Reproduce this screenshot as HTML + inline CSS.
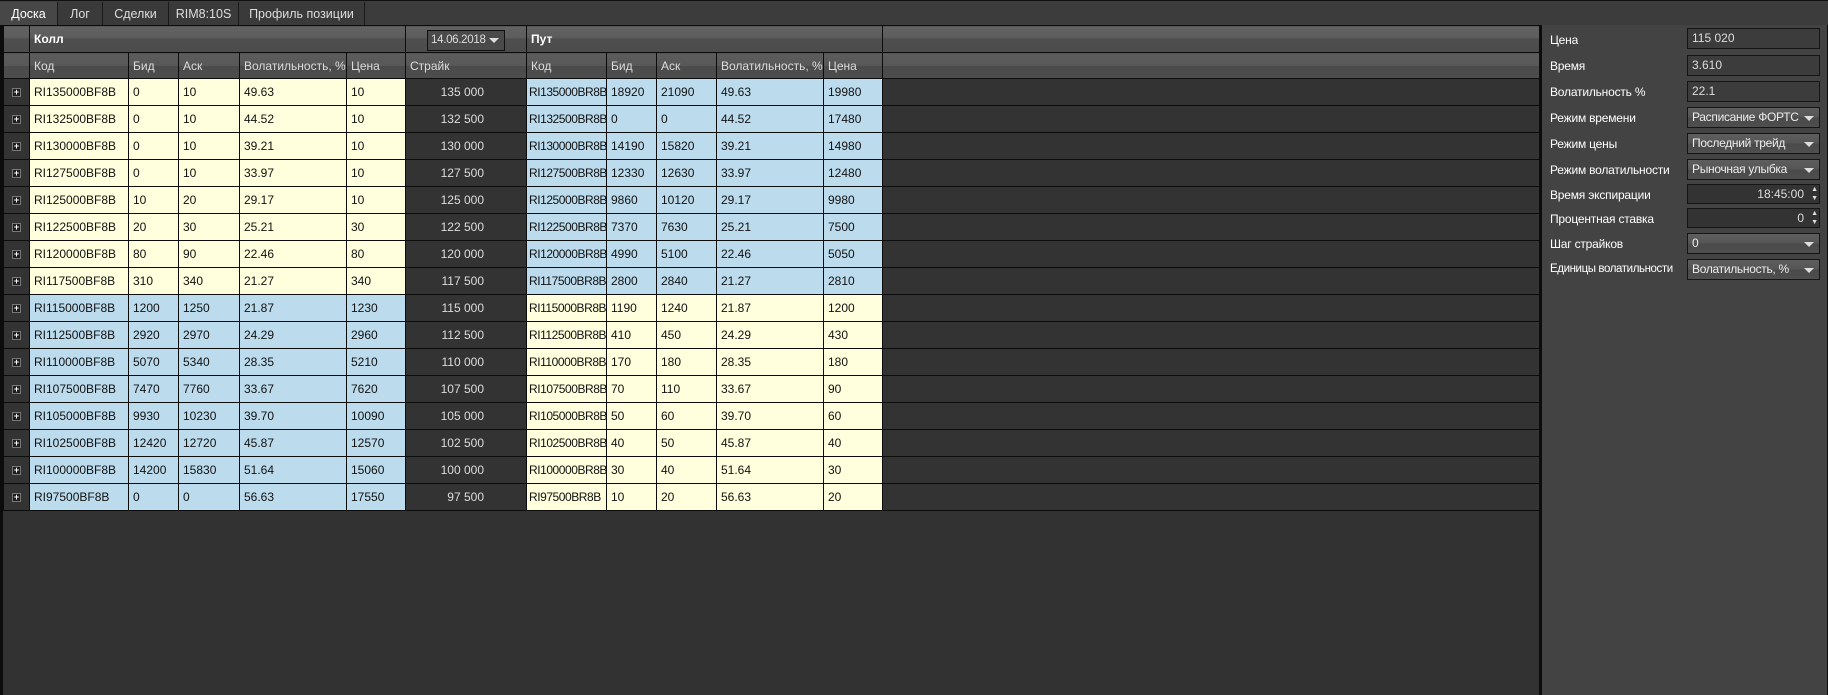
<!DOCTYPE html>
<html><head><meta charset="utf-8"><style>
*{margin:0;padding:0;box-sizing:border-box}
body{width:1828px;height:695px;background:#323232;font-family:"Liberation Sans","DejaVu Sans",sans-serif;font-size:12px;overflow:hidden;position:relative}
.tabs{position:absolute;left:0;top:0;width:1828px;height:25px;background:#3c3c3c;border-top:1px solid #111}
.tab{position:absolute;top:1px;height:24px;line-height:24px;color:#ddd;text-align:center;background:#3a3a3a;border-right:1px solid #1a1a1a;font-size:12.5px}
.tab.act{background:#474747;color:#fff}
table{position:absolute;left:3px;top:25px;width:1536px;border-collapse:collapse;table-layout:fixed}
td{border:1px solid #0c0c0c;height:27px;padding:0 0 0 4px;white-space:nowrap;overflow:hidden;color:#111;font-size:12px}
td:nth-child(8){padding-left:2px;letter-spacing:-0.45px}
.gh td{height:27px;background:linear-gradient(#626262 0,#5c5c5c 45%,#4e4e4e 46%,#4c4c4c 100%);color:#fff;font-weight:bold}
.ch td{height:26px;background:linear-gradient(#5c5c5c 0,#585858 50%,#4b4b4b 51%,#4d4d4d 100%);color:#ddd}
.y{background:#ffffdd}.b{background:#bcdcee}
.s{background:#333;color:#ddd;text-align:right;padding-right:42px}
.e{background:#333;padding:0}
.e span{display:block;margin:0 auto;width:9px;height:9px;background:#1e1e1e;border:1px solid #777;color:#fff;font-size:9px;line-height:7px;text-align:center;font-weight:bold}
.f{background:#333}
.rp{position:absolute;left:1539px;top:25px;width:289px;height:670px;background:#434343;border-left:3px solid #0c0c0c;border-right:1px solid #0c0c0c}
.lb{position:absolute;left:8px;color:#fff;font-size:12px;letter-spacing:-0.2px}
.in{position:absolute;left:145px;width:133px;height:21px;border:1px solid #151515;background:#3c3c3c;color:#ddd;font-size:12px;line-height:19px;padding-left:4px;white-space:nowrap;overflow:hidden}
.dd{background:linear-gradient(#5e5e5e,#555 50%,#4a4a4a 51%,#4e4e4e);color:#eee;letter-spacing:-0.3px}
.dd:after{content:"";position:absolute;right:5px;top:8px;border-left:5px solid transparent;border-right:5px solid transparent;border-top:5px solid #ddd}
.sp{background:#333;text-align:right;padding-right:15px}
.sp:after{content:"▲\A▼";white-space:pre;position:absolute;right:1px;top:0;font-size:7px;line-height:9px;color:#ddd}
.date{position:absolute;left:427px;top:30px;width:78px;height:21px;border:1px solid #111;background:#4a4a4a;color:#ddd;line-height:19px;padding-left:3px;font-size:11.5px;letter-spacing:-0.3px}
.date:after{content:"";position:absolute;right:5px;top:7px;border-left:5px solid transparent;border-right:5px solid transparent;border-top:5px solid #ddd}
</style></head><body>
<div class="tabs">
<div class="tab act" style="left:0;width:58px">Доска</div>
<div class="tab" style="left:58px;width:45px">Лог</div>
<div class="tab" style="left:103px;width:66px">Сделки</div>
<div class="tab" style="left:169px;width:70px">RIM8:10S</div>
<div class="tab" style="left:239px;width:126px">Профиль позиции</div>
</div>
<table>
<colgroup><col style="width:26px"><col style="width:99px"><col style="width:50px"><col style="width:61px"><col style="width:107px"><col style="width:59px"><col style="width:121px"><col style="width:80px"><col style="width:50px"><col style="width:60px"><col style="width:107px"><col style="width:59px"><col style="width:657px"></colgroup>
<tr class="gh"><td></td><td colspan="5">Колл</td><td></td><td colspan="5" style="padding-left:4px;letter-spacing:0">Пут</td><td></td></tr>
<tr class="ch"><td></td><td>Код</td><td>Бид</td><td>Аск</td><td>Волатильность, %</td><td>Цена</td><td>Страйк</td><td style="padding-left:4px;letter-spacing:0">Код</td><td>Бид</td><td>Аск</td><td>Волатильность, %</td><td>Цена</td><td></td></tr>
<tr><td class="e"><span>+</span></td><td class="y">RI135000BF8B</td><td class="y">0</td><td class="y">10</td><td class="y">49.63</td><td class="y">10</td><td class="s">135 000</td><td class="b">RI135000BR8B</td><td class="b">18920</td><td class="b">21090</td><td class="b">49.63</td><td class="b">19980</td><td class="f"></td></tr>
<tr><td class="e"><span>+</span></td><td class="y">RI132500BF8B</td><td class="y">0</td><td class="y">10</td><td class="y">44.52</td><td class="y">10</td><td class="s">132 500</td><td class="b">RI132500BR8B</td><td class="b">0</td><td class="b">0</td><td class="b">44.52</td><td class="b">17480</td><td class="f"></td></tr>
<tr><td class="e"><span>+</span></td><td class="y">RI130000BF8B</td><td class="y">0</td><td class="y">10</td><td class="y">39.21</td><td class="y">10</td><td class="s">130 000</td><td class="b">RI130000BR8B</td><td class="b">14190</td><td class="b">15820</td><td class="b">39.21</td><td class="b">14980</td><td class="f"></td></tr>
<tr><td class="e"><span>+</span></td><td class="y">RI127500BF8B</td><td class="y">0</td><td class="y">10</td><td class="y">33.97</td><td class="y">10</td><td class="s">127 500</td><td class="b">RI127500BR8B</td><td class="b">12330</td><td class="b">12630</td><td class="b">33.97</td><td class="b">12480</td><td class="f"></td></tr>
<tr><td class="e"><span>+</span></td><td class="y">RI125000BF8B</td><td class="y">10</td><td class="y">20</td><td class="y">29.17</td><td class="y">10</td><td class="s">125 000</td><td class="b">RI125000BR8B</td><td class="b">9860</td><td class="b">10120</td><td class="b">29.17</td><td class="b">9980</td><td class="f"></td></tr>
<tr><td class="e"><span>+</span></td><td class="y">RI122500BF8B</td><td class="y">20</td><td class="y">30</td><td class="y">25.21</td><td class="y">30</td><td class="s">122 500</td><td class="b">RI122500BR8B</td><td class="b">7370</td><td class="b">7630</td><td class="b">25.21</td><td class="b">7500</td><td class="f"></td></tr>
<tr><td class="e"><span>+</span></td><td class="y">RI120000BF8B</td><td class="y">80</td><td class="y">90</td><td class="y">22.46</td><td class="y">80</td><td class="s">120 000</td><td class="b">RI120000BR8B</td><td class="b">4990</td><td class="b">5100</td><td class="b">22.46</td><td class="b">5050</td><td class="f"></td></tr>
<tr><td class="e"><span>+</span></td><td class="y">RI117500BF8B</td><td class="y">310</td><td class="y">340</td><td class="y">21.27</td><td class="y">340</td><td class="s">117 500</td><td class="b">RI117500BR8B</td><td class="b">2800</td><td class="b">2840</td><td class="b">21.27</td><td class="b">2810</td><td class="f"></td></tr>
<tr><td class="e"><span>+</span></td><td class="b">RI115000BF8B</td><td class="b">1200</td><td class="b">1250</td><td class="b">21.87</td><td class="b">1230</td><td class="s">115 000</td><td class="y">RI115000BR8B</td><td class="y">1190</td><td class="y">1240</td><td class="y">21.87</td><td class="y">1200</td><td class="f"></td></tr>
<tr><td class="e"><span>+</span></td><td class="b">RI112500BF8B</td><td class="b">2920</td><td class="b">2970</td><td class="b">24.29</td><td class="b">2960</td><td class="s">112 500</td><td class="y">RI112500BR8B</td><td class="y">410</td><td class="y">450</td><td class="y">24.29</td><td class="y">430</td><td class="f"></td></tr>
<tr><td class="e"><span>+</span></td><td class="b">RI110000BF8B</td><td class="b">5070</td><td class="b">5340</td><td class="b">28.35</td><td class="b">5210</td><td class="s">110 000</td><td class="y">RI110000BR8B</td><td class="y">170</td><td class="y">180</td><td class="y">28.35</td><td class="y">180</td><td class="f"></td></tr>
<tr><td class="e"><span>+</span></td><td class="b">RI107500BF8B</td><td class="b">7470</td><td class="b">7760</td><td class="b">33.67</td><td class="b">7620</td><td class="s">107 500</td><td class="y">RI107500BR8B</td><td class="y">70</td><td class="y">110</td><td class="y">33.67</td><td class="y">90</td><td class="f"></td></tr>
<tr><td class="e"><span>+</span></td><td class="b">RI105000BF8B</td><td class="b">9930</td><td class="b">10230</td><td class="b">39.70</td><td class="b">10090</td><td class="s">105 000</td><td class="y">RI105000BR8B</td><td class="y">50</td><td class="y">60</td><td class="y">39.70</td><td class="y">60</td><td class="f"></td></tr>
<tr><td class="e"><span>+</span></td><td class="b">RI102500BF8B</td><td class="b">12420</td><td class="b">12720</td><td class="b">45.87</td><td class="b">12570</td><td class="s">102 500</td><td class="y">RI102500BR8B</td><td class="y">40</td><td class="y">50</td><td class="y">45.87</td><td class="y">40</td><td class="f"></td></tr>
<tr><td class="e"><span>+</span></td><td class="b">RI100000BF8B</td><td class="b">14200</td><td class="b">15830</td><td class="b">51.64</td><td class="b">15060</td><td class="s">100 000</td><td class="y">RI100000BR8B</td><td class="y">30</td><td class="y">40</td><td class="y">51.64</td><td class="y">30</td><td class="f"></td></tr>
<tr><td class="e"><span>+</span></td><td class="b">RI97500BF8B</td><td class="b">0</td><td class="b">0</td><td class="b">56.63</td><td class="b">17550</td><td class="s">97 500</td><td class="y">RI97500BR8B</td><td class="y">10</td><td class="y">20</td><td class="y">56.63</td><td class="y">20</td><td class="f"></td></tr>
</table>
<div style="position:absolute;left:0;top:25px;width:3px;height:670px;background:#0c0c0c"></div>
<div class="date">14.06.2018</div>
<div class="rp">
<div class="lb" style="top:8px">Цена</div><div class="in" style="top:3px">115 020</div>
<div class="lb" style="top:34px">Время</div><div class="in" style="top:30px">3.610</div>
<div class="lb" style="top:60px">Волатильность %</div><div class="in" style="top:56px">22.1</div>
<div class="lb" style="top:86px">Режим времени</div><div class="in dd" style="top:82px">Расписание ФОРТС</div>
<div class="lb" style="top:112px">Режим цены</div><div class="in dd" style="top:108px">Последний трейд</div>
<div class="lb" style="top:138px">Режим волатильности</div><div class="in dd" style="top:134px">Рыночная улыбка</div>
<div class="lb" style="top:163px">Время экспирации</div><div class="in sp" style="top:159px;height:20px">18:45:00</div>
<div class="lb" style="top:187px">Процентная ставка</div><div class="in sp" style="top:183px;height:20px">0</div>
<div class="lb" style="top:212px">Шаг страйков</div><div class="in dd" style="top:208px">0</div>
<div class="lb" style="top:238px;font-size:11.5px;letter-spacing:-0.4px">Единицы волатильности</div><div class="in dd" style="top:234px">Волатильность, %</div>
</div>
</body></html>
